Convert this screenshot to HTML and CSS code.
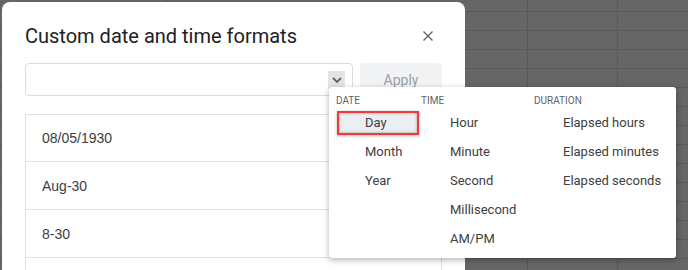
FILE: index.html
```html
<!DOCTYPE html>
<html lang="en">
<head>
    <meta charset="UTF-8">
    <meta name="viewport" content="width=device-width, initial-scale=1.0">
    <title>Custom date and time formats</title>
    <link rel="stylesheet" href="styles.css">
</head>
<body>
    <!-- Dialog over the sheet -->
    <div class="dialog">
        <div class="dialog-head">
            <h2 class="dialog-title">Custom date and time formats</h2>
            <button class="close-btn" aria-label="Close">
                <svg width="10" height="10" viewBox="0 0 10 10">
                    <path d="M0.5 0.5 L9.5 9.5 M9.5 0.5 L0.5 9.5" stroke="#5f6368" stroke-width="1.4" fill="none"/>
                </svg>
            </button>
        </div>

        <div class="format-row">
            <div class="format-input">
                <span class="format-arrow">
                    <svg width="10" height="6" viewBox="0 0 10 6">
                        <path d="M1 1 L5 5 L9 1" stroke="#5f6368" stroke-width="1.8" fill="none"/>
                    </svg>
                </span>
            </div>
            <button class="apply-btn">Apply</button>
        </div>

        <ul class="format-list">
            <li>08/05/1930</li>
            <li>Aug-30</li>
            <li>8-30</li>
            <li></li>
        </ul>
    </div>

    <!-- Dropdown menu -->
    <div class="format-menu">
        <div class="menu-col">
            <div class="menu-header">Date</div>
            <div class="menu-item marked"><span class="mark">Day</span></div>
            <div class="menu-item">Month</div>
            <div class="menu-item">Year</div>
        </div>
        <div class="menu-col">
            <div class="menu-header">Time</div>
            <div class="menu-item">Hour</div>
            <div class="menu-item">Minute</div>
            <div class="menu-item">Second</div>
            <div class="menu-item">Millisecond</div>
            <div class="menu-item">AM/PM</div>
        </div>
        <div class="menu-col">
            <div class="menu-header">Duration</div>
            <div class="menu-item">Elapsed hours</div>
            <div class="menu-item">Elapsed minutes</div>
            <div class="menu-item">Elapsed seconds</div>
        </div>
    </div>
</body>
</html>
```

FILE: styles.css
```css
html, body {
    height: 270px;
}

body {
    position: relative;
    margin: 0;
    padding: 2px 0 0 2px;
    box-sizing: border-box;
    overflow: hidden;
    font-family: Roboto, "Liberation Sans", Arial, sans-serif;
    background-color: #666666;
    background-image:
        linear-gradient(#595959 1px, transparent 1px),
        linear-gradient(90deg, #595959 1px, transparent 1px);
    background-size: 90px 19px;
    background-position: 527px 11px;
}

.dialog {
    width: 463px;
    height: 268px;
    box-sizing: border-box;
    overflow: hidden;
    padding: 22px 23px 0 23px;
    background: #fff;
    border-radius: 8px 8px 0 0;
}

.dialog-head {
    display: flex;
    justify-content: space-between;
    align-items: center;
    height: 24px;
}

.dialog-title {
    margin: 0;
    font-size: 20px;
    font-weight: 400;
    line-height: 24px;
    color: #202124;
}

.close-btn {
    display: flex;
    align-items: center;
    justify-content: center;
    width: 24px;
    height: 24px;
    margin-right: 2px;
    padding: 0;
    border: none;
    background: none;
}

.format-row {
    display: flex;
    gap: 7px;
    margin-top: 15px;
    height: 33px;
}

.format-input {
    flex: 0 0 328px;
    box-sizing: border-box;
    display: flex;
    justify-content: flex-end;
    align-items: center;
    padding-right: 7px;
    border: 1px solid #dadce0;
    border-radius: 4px;
}

.format-arrow {
    display: flex;
    align-items: center;
    justify-content: center;
    width: 17px;
    height: 18px;
    margin-top: 1px;
    background: #e4e4e4;
}

.apply-btn {
    flex: 1;
    border: none;
    border-radius: 4px;
    background: #f1f3f4;
    color: #9aa0a6;
    font-family: Roboto, sans-serif;
    font-size: 14px;
}

.format-list {
    list-style: none;
    margin: 18px 0 0 0;
    padding: 0;
    border: 1px solid #e0e0e0;
}

.format-list li {
    display: flex;
    align-items: center;
    height: 47px;
    padding-left: 16px;
    border-bottom: 1px solid #e0e0e0;
    font-family: "Liberation Sans", Arial, sans-serif;
    font-size: 14px;
    color: #3c4043;
}

.format-list li:first-child {
    height: 46px;
}

.format-menu {
    position: absolute;
    left: 329px;
    top: 87px;
    width: 347px;
    box-sizing: border-box;
    display: grid;
    grid-template-columns: 85px 113px 1fr;
    padding: 7px 7px 5px 7px;
    background: #fff;
    border-radius: 3px;
    box-shadow: 0 2px 6px rgba(0, 0, 0, 0.3);
}

.menu-header {
    height: 14px;
    line-height: 14px;
    font-size: 10px;
    text-transform: uppercase;
    color: #5f6368;
}

.menu-item {
    display: flex;
    align-items: center;
    height: 29px;
    padding-left: 29px;
    font-size: 13px;
    color: #3c4043;
}

.menu-item.marked {
    padding-left: 1px;
}

.mark {
    display: flex;
    align-items: center;
    box-sizing: border-box;
    width: 82px;
    height: 24px;
    padding-left: 26px;
    border: 2px solid #ee3b3e;
    background: #eceff1;
    box-shadow: inset 0 0 3px rgba(0, 0, 0, 0.35), 0 1px 3px rgba(0, 0, 0, 0.3);
}
```
